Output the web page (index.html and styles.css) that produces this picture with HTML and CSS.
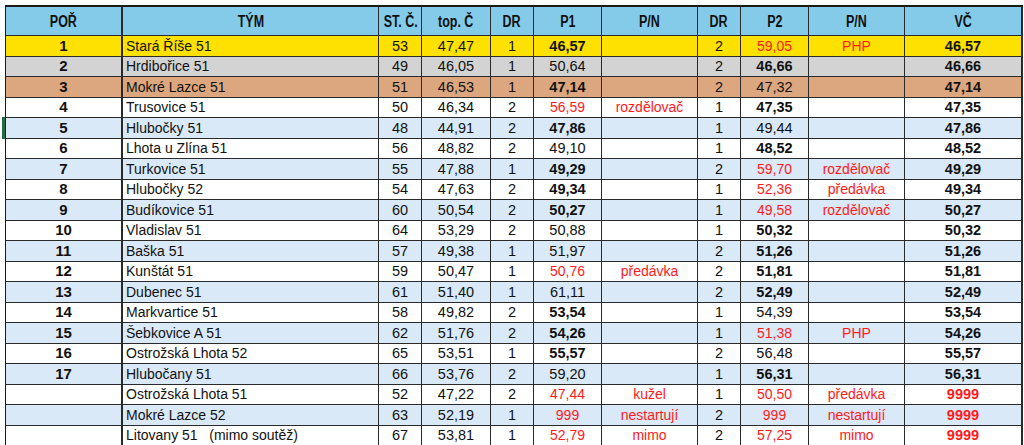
FILE: index.html
```html
<!DOCTYPE html>
<html lang="cs">
<head>
<meta charset="utf-8">
<title>Výsledky</title>
<link rel="stylesheet" href="styles.css">
</head>
<body>
<div class="sheet">
  <div class="sel-marker"></div>
  <table class="results">
    <thead>
      <tr>
        <th class="c-por"><span>POŘ</span></th>
        <th class="c-team"><span>TÝM</span></th>
        <th class="c-st"><span>ST. Č.</span></th>
        <th class="c-top"><span>top. Č</span></th>
        <th class="c-dr"><span>DR</span></th>
        <th class="c-p"><span>P1</span></th>
        <th class="c-pn"><span>P/N</span></th>
        <th class="c-dr"><span>DR</span></th>
        <th class="c-p"><span>P2</span></th>
        <th class="c-pn"><span>P/N</span></th>
        <th class="c-vc"><span>VČ</span></th>
      </tr>
    </thead>
    <tbody>
      <tr class="gold"><td class="por">1</td><td class="team">Stará Říše 51</td><td>53</td><td>47,47</td><td>1</td><td class="b">46,57</td><td></td><td>2</td><td class="r">59,05</td><td class="r">PHP</td><td class="b">46,57</td></tr>
      <tr class="silver"><td class="por">2</td><td class="team">Hrdibořice 51</td><td>49</td><td>46,05</td><td>1</td><td>50,64</td><td></td><td>2</td><td class="b">46,66</td><td></td><td class="b">46,66</td></tr>
      <tr class="bronze"><td class="por">3</td><td class="team">Mokré Lazce 51</td><td>51</td><td>46,53</td><td>1</td><td class="b">47,14</td><td></td><td>2</td><td>47,32</td><td></td><td class="b">47,14</td></tr>
      <tr><td class="por">4</td><td class="team">Trusovice 51</td><td>50</td><td>46,34</td><td>2</td><td class="r">56,59</td><td class="r">rozdělovač</td><td>1</td><td class="b">47,35</td><td></td><td class="b">47,35</td></tr>
      <tr class="alt"><td class="por">5</td><td class="team">Hlubočky 51</td><td>48</td><td>44,91</td><td>2</td><td class="b">47,86</td><td></td><td>1</td><td>49,44</td><td></td><td class="b">47,86</td></tr>
      <tr><td class="por">6</td><td class="team">Lhota u Zlína 51</td><td>56</td><td>48,82</td><td>2</td><td>49,10</td><td></td><td>1</td><td class="b">48,52</td><td></td><td class="b">48,52</td></tr>
      <tr class="alt"><td class="por">7</td><td class="team">Turkovice 51</td><td>55</td><td>47,88</td><td>1</td><td class="b">49,29</td><td></td><td>2</td><td class="r">59,70</td><td class="r">rozdělovač</td><td class="b">49,29</td></tr>
      <tr><td class="por">8</td><td class="team">Hlubočky 52</td><td>54</td><td>47,63</td><td>2</td><td class="b">49,34</td><td></td><td>1</td><td class="r">52,36</td><td class="r">předávka</td><td class="b">49,34</td></tr>
      <tr class="alt"><td class="por">9</td><td class="team">Budíkovice 51</td><td>60</td><td>50,54</td><td>2</td><td class="b">50,27</td><td></td><td>1</td><td class="r">49,58</td><td class="r">rozdělovač</td><td class="b">50,27</td></tr>
      <tr><td class="por">10</td><td class="team">Vladislav 51</td><td>64</td><td>53,29</td><td>2</td><td>50,88</td><td></td><td>1</td><td class="b">50,32</td><td></td><td class="b">50,32</td></tr>
      <tr class="alt"><td class="por">11</td><td class="team">Baška 51</td><td>57</td><td>49,38</td><td>1</td><td>51,97</td><td></td><td>2</td><td class="b">51,26</td><td></td><td class="b">51,26</td></tr>
      <tr><td class="por">12</td><td class="team">Kunštát 51</td><td>59</td><td>50,47</td><td>1</td><td class="r">50,76</td><td class="r">předávka</td><td>2</td><td class="b">51,81</td><td></td><td class="b">51,81</td></tr>
      <tr class="alt"><td class="por">13</td><td class="team">Dubenec 51</td><td>61</td><td>51,40</td><td>1</td><td>61,11</td><td></td><td>2</td><td class="b">52,49</td><td></td><td class="b">52,49</td></tr>
      <tr><td class="por">14</td><td class="team">Markvartice 51</td><td>58</td><td>49,82</td><td>2</td><td class="b">53,54</td><td></td><td>1</td><td>54,39</td><td></td><td class="b">53,54</td></tr>
      <tr class="alt"><td class="por">15</td><td class="team">Šebkovice A 51</td><td>62</td><td>51,76</td><td>2</td><td class="b">54,26</td><td></td><td>1</td><td class="r">51,38</td><td class="r">PHP</td><td class="b">54,26</td></tr>
      <tr><td class="por">16</td><td class="team">Ostrožská Lhota 52</td><td>65</td><td>53,51</td><td>1</td><td class="b">55,57</td><td></td><td>2</td><td>56,48</td><td></td><td class="b">55,57</td></tr>
      <tr class="alt"><td class="por">17</td><td class="team">Hlubočany 51</td><td>66</td><td>53,76</td><td>2</td><td>59,20</td><td></td><td>1</td><td class="b">56,31</td><td></td><td class="b">56,31</td></tr>
      <tr><td class="por"></td><td class="team">Ostrožská Lhota 51</td><td>52</td><td>47,22</td><td>2</td><td class="r">47,44</td><td class="r">kužel</td><td>1</td><td class="r">50,50</td><td class="r">předávka</td><td class="b r">9999</td></tr>
      <tr class="alt"><td class="por"></td><td class="team">Mokré Lazce 52</td><td>63</td><td>52,19</td><td>1</td><td class="r">999</td><td class="r">nestartují</td><td>2</td><td class="r">999</td><td class="r">nestartují</td><td class="b r">9999</td></tr>
      <tr><td class="por"></td><td class="team">Litovany 51   (mimo soutěž)</td><td>67</td><td>53,81</td><td>1</td><td class="r">52,79</td><td class="r">mimo</td><td>2</td><td class="r">57,25</td><td class="r">mimo</td><td class="b r">9999</td></tr>
    </tbody>
  </table>
</div>
</body>
</html>
```

FILE: styles.css
```css
html, body {
  margin: 0;
  padding: 0;
  background: #ffffff;
}

.sheet {
  position: relative;
  padding: 5px 0 0 5px;
  width: 1024px;
  height: 445px;
  overflow: hidden;
  box-sizing: border-box;
}

.sel-marker {
  position: absolute;
  left: 2px;
  top: 117px;
  width: 3px;
  height: 22px;
  background: #1e7145;
}

.results {
  border-collapse: separate;
  border-spacing: 0;
  table-layout: fixed;
  width: 1017px;
  border-top: 2px solid #1a1a1a;
  border-left: 1px solid #1a1a1a;
  font-family: "Liberation Sans", Arial, sans-serif;
  font-size: 14.5px;
  color: #111;
}

.results th,
.results td {
  box-sizing: border-box;
  border-right: 1px solid #2a2a2a;
  border-bottom: 1px solid #2a2a2a;
  padding: 0;
  text-align: center;
  white-space: pre;
  overflow: hidden;
}

.results th {
  height: 29px;
  background: #84cbea;
  font-family: "Liberation Sans", Arial, sans-serif;
  font-weight: 700;
  font-size: 16px;
  color: #111;
  padding-top: 1px;
}

.results th span {
  display: inline-block;
  transform: scaleX(0.78);
}

.results td {
  height: 20.5px;
  line-height: 18px;
}

.results th:first-child,
.results td:first-child {
  border-right-width: 2px;
}

.results th:last-child,
.results td:last-child {
  border-right-width: 2px;
}

.c-por { width: 117px; }
.c-team { width: 256px; }
.c-st { width: 43px; }
.c-top { width: 69px; }
.c-dr { width: 43px; }
.c-p { width: 68px; }
.c-pn { width: 96px; }
.c-vc { width: 118px; }

.results td.por {
  font-weight: 700;
  font-size: 15px;
}

.results td.team {
  text-align: left;
  padding-left: 3px;
  font-size: 14px;
}

.results td.b {
  font-weight: 700;
}

.results td.r {
  color: #ff1a1a;
  font-size: 14px;
}

.results td.b.r {
  font-size: 14.5px;
}

.gold td { background: #ffe100; }
.silver td { background: #d3d3d3; }
.bronze td { background: #dca67e; }
.alt td { background: #dae9f8; }
```
